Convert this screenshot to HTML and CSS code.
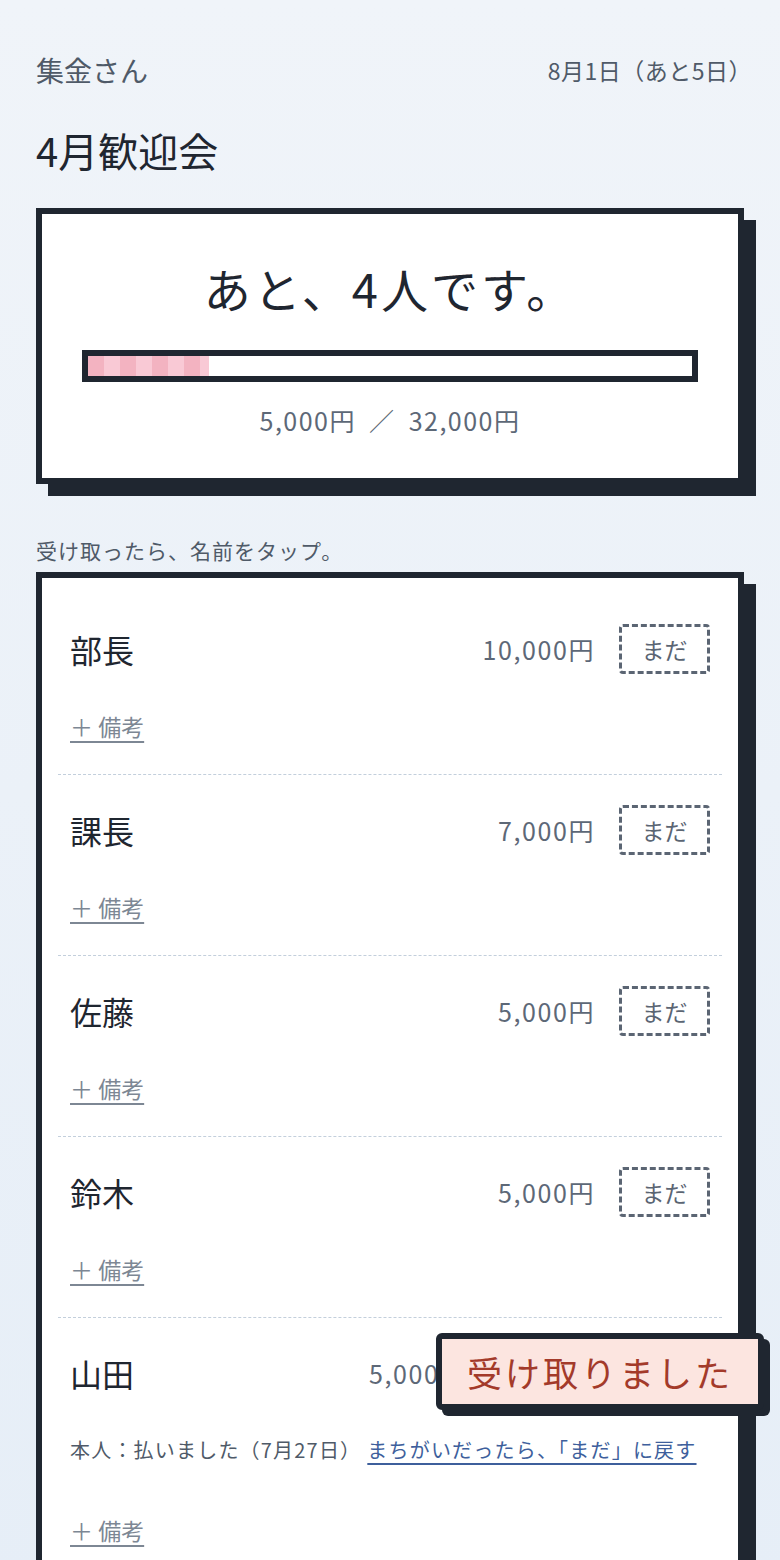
FILE: index.html
```html
<!DOCTYPE html>
<html lang="ja">

<head>
  <meta charset="UTF-8">
  <meta name="viewport" content="width=device-width, initial-scale=1.0">
  <title>4月歓迎会 - 集金さん</title>
  <link rel="stylesheet" href="styles.css">
</head>

<body>
  <div class="page">
    <div class="header">
      <div class="app-name">集金さん</div>
      <div class="deadline">8月1日（あと5日）</div>
    </div>
    <h1 class="event-title">4月歓迎会</h1>

    <div class="summary">
      <div class="remaining">あと、4人です。</div>
      <div class="progress">
        <div class="progress-fill" style="width: 20%"></div>
      </div>
      <div class="total">5,000円 ／ 32,000円</div>
    </div>

    <div class="hint">受け取ったら、名前をタップ。</div>

    <div class="members">
      <div class="member">
        <div class="member-top">
          <div class="member-name">部長</div>
          <div class="member-amount">10,000円</div>
          <div class="status-btn">まだ</div>
        </div>
        <a class="note-link">＋ 備考</a>
      </div>

      <div class="member">
        <div class="member-top">
          <div class="member-name">課長</div>
          <div class="member-amount">7,000円</div>
          <div class="status-btn">まだ</div>
        </div>
        <a class="note-link">＋ 備考</a>
      </div>

      <div class="member">
        <div class="member-top">
          <div class="member-name">佐藤</div>
          <div class="member-amount">5,000円</div>
          <div class="status-btn">まだ</div>
        </div>
        <a class="note-link">＋ 備考</a>
      </div>

      <div class="member">
        <div class="member-top">
          <div class="member-name">鈴木</div>
          <div class="member-amount">5,000円</div>
          <div class="status-btn">まだ</div>
        </div>
        <a class="note-link">＋ 備考</a>
      </div>

      <div class="member paid">
        <div class="member-top">
          <div class="member-name">山田</div>
          <div class="member-amount">5,000円</div>
          <div class="status-done">受取済</div>
        </div>
        <div class="paid-info">
          本人：払いました（7月27日）<a class="undo-link">まちがいだったら、「まだ」に戻す</a>
        </div>
        <a class="note-link note-after">＋ 備考</a>
        <div class="toast">受け取りました</div>
      </div>
    </div>
  </div>
</body>

</html>
```

FILE: styles.css
```css
body {
  margin: 0;
  min-height: 100vh;
  background: linear-gradient(180deg, #f0f4f9, #e6eef7);
  color: #1f2630;
  font-family: "Noto Sans CJK JP", "Noto Sans", sans-serif;
}

.page {
  padding: 50px 36px 0;
}

.header {
  display: flex;
  justify-content: space-between;
  align-items: center;
  height: 40px;
  color: #4f5a68;
}

.app-name {
  font-size: 28px;
}

.deadline {
  font-size: 23px;
  letter-spacing: 0.5px;
  margin-right: -8px;
}

.event-title {
  margin: 36px 0 0;
  font-size: 40px;
  font-weight: 400;
  line-height: 48px;
}

/* 集計カード */
.summary {
  margin-top: 34px;
  padding: 44px 40px 40px;
  background: white;
  border: 6px solid #1f2630;
  box-shadow: 12px 12px 0 #1f2630;
  text-align: center;
}

.remaining {
  font-size: 47px;
  line-height: 60px;
  letter-spacing: 3px;
}

.progress {
  margin-top: 32px;
  height: 32px;
  box-sizing: border-box;
  border: 6px solid #1f2630;
  background: white;
}

.progress-fill {
  height: 100%;
  background: repeating-linear-gradient(90deg, #f3b3c1 0 16px, #f9c9d5 16px 32px);
}

.total {
  margin-top: 20px;
  font-size: 25px;
  line-height: 36px;
  letter-spacing: 1.5px;
  word-spacing: 6px;
  color: #5d6877;
}

.hint {
  margin-top: 51px;
  font-size: 21px;
  line-height: 30px;
  letter-spacing: 1px;
  color: #4f5a68;
}

/* メンバー一覧 */
.members {
  margin-top: 7px;
  padding: 16px 16px 0;
  background: white;
  border: 6px solid #1f2630;
  box-shadow: 12px 12px 0 #1f2630;
}

.member {
  position: relative;
  padding: 29px 12px 32px;
  border-bottom: 1px dashed #c3cfdc;
}

.member-top {
  display: flex;
  align-items: center;
  height: 52px;
}

.member-name {
  flex: 1;
  font-size: 32px;
}

.member-amount {
  margin-right: 24px;
  font-size: 25px;
  letter-spacing: 1.6px;
  color: #5d6877;
}

.status-btn {
  width: 91px;
  height: 50px;
  box-sizing: border-box;
  display: flex;
  justify-content: center;
  align-items: center;
  border: 3px dashed #5b6573;
  border-radius: 4px;
  font-size: 23px;
  color: #5b6573;
}

.status-done {
  width: 220px;
  height: 50px;
  box-sizing: border-box;
  display: flex;
  justify-content: center;
  align-items: center;
  border: 3px solid #1f2630;
  border-radius: 4px;
  font-size: 23px;
}

.note-link {
  display: inline-block;
  margin-top: 35px;
  font-size: 23px;
  line-height: 32px;
  color: #7d8794;
  text-decoration: underline;
  text-decoration-thickness: 2px;
  text-underline-offset: 5px;
}

.paid-info {
  margin-top: 36px;
  font-size: 20px;
  line-height: 30px;
  letter-spacing: 1.2px;
  color: #4f5a68;
}

.undo-link {
  margin-left: 6px;
  color: #3e5f9c;
  text-decoration: underline;
  text-decoration-thickness: 2px;
  text-underline-offset: 5px;
}

.note-link.note-after {
  margin-top: 49px;
}

/* 受け取り通知 */
.toast {
  position: absolute;
  top: 15px;
  right: -42px;
  width: 328px;
  height: 77px;
  box-sizing: border-box;
  display: flex;
  justify-content: center;
  align-items: center;
  background: #fce5e0;
  border: 6px solid #1f2630;
  border-radius: 6px;
  box-shadow: 6px 6px 0 #1f2630;
  font-size: 35px;
  letter-spacing: 3px;
  color: #a33a2a;
}
```
